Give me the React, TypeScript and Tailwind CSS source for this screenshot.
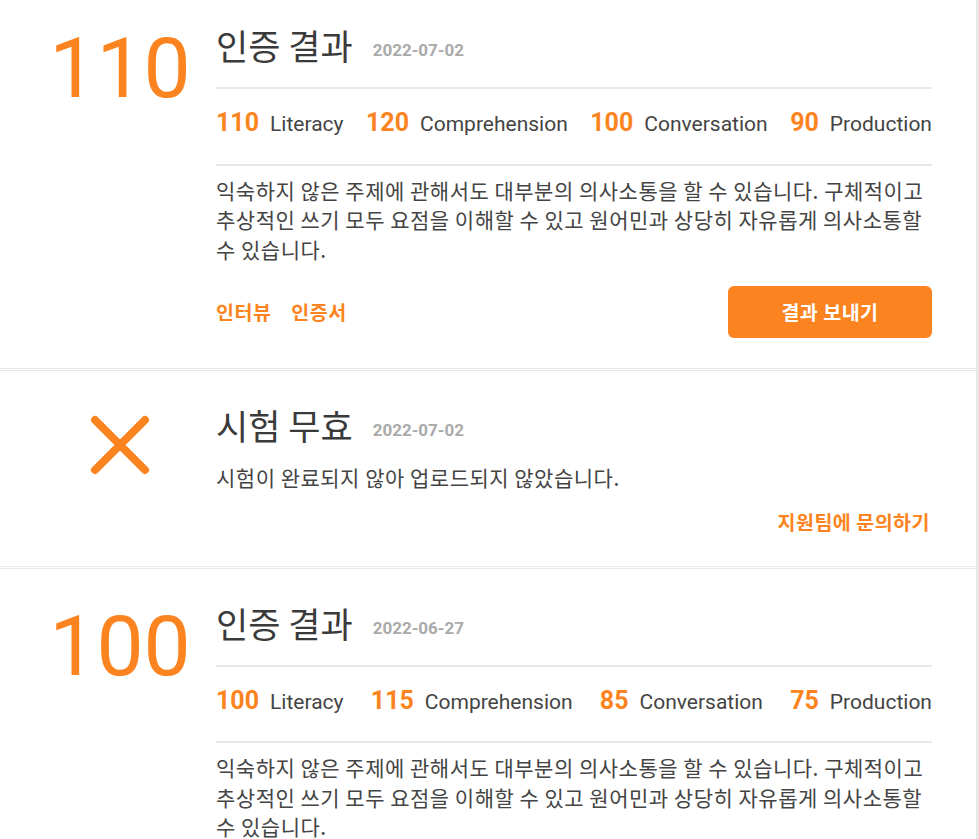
import React from "react";

const ORANGE = "text-[#fc8420]";
const KR = { fontFamily: '"Noto Sans CJK KR", "Noto Sans", sans-serif' };

type Stat = { v: string; label: string };

function XIcon() {
  return (
    <svg width="60" height="60" viewBox="0 0 60 60" className="mt-[14px]">
      <path d="M5 5 L55 55 M55 5 L5 55" stroke="#fc8420" strokeWidth="8" strokeLinecap="round" fill="none" />
    </svg>
  );
}

function Title({ text, date }: { text: string; date: string }) {
  return (
    <div className="flex items-center gap-[20px] h-[48px]">
      <span className="text-[35px] leading-[48px] text-[#3a3a3a]" style={KR}>{text}</span>
      <span className="text-[17px] leading-[20px] font-bold text-[#aaaaaa] mt-[10px]" style={{ fontFamily: "Roboto, sans-serif" }}>{date}</span>
    </div>
  );
}

function ResultCard({ score, date, stats, first }: { score: string; date: string; stats: Stat[]; first?: boolean }) {
  return (
    <div className={`flex bg-white ${first ? "-mt-[9px] border-b" : "border-y mt-[1px]"} border-[#e8e8e8] pt-[30px] pb-[30px]`}>
      <div className="w-[216px] pl-6 flex justify-center shrink-0">
        <div className={`${ORANGE} text-[84px] leading-none mt-[6px]`} style={{ fontFamily: "Roboto, sans-serif" }}>
          {score}
        </div>
      </div>
      <div className="w-[716px] flex flex-col">
        <Title text="인증 결과" date={date} />
        <div className="h-[2px] bg-[#e8e8e8] mt-[18px]" />
        <div className="flex justify-between items-baseline pt-[17px] pb-[23px]" style={{ fontFamily: "Roboto, sans-serif" }}>
          {stats.map((s) => (
            <div key={s.label} className="flex items-baseline gap-[11px]">
              <span className={`${ORANGE} text-[25px] font-bold leading-[33px]`}>{s.v}</span>
              <span className="text-[21px] text-[#444]">{s.label}</span>
            </div>
          ))}
        </div>
        <div className="h-[2px] bg-[#e8e8e8]" />
        <p className="mt-[10px] text-[21px] leading-[29.5px] tracking-[0.5px] text-[#444]" style={KR}>
          익숙하지 않은 주제에 관해서도 대부분의 의사소통을 할 수 있습니다. 구체적이고 추상적인 쓰기 모두 요점을 이해할 수 있고 원어민과 상당히 자유롭게 의사소통할 수 있습니다.
        </p>
        <div className="flex items-center justify-between mt-[22px]" style={KR}>
          <div className={`flex gap-[20px] ${ORANGE} font-bold text-[19.5px] tracking-[0.5px]`}>
            <span>인터뷰</span>
            <span>인증서</span>
          </div>
          <button className="w-[204px] h-[52px] rounded-[6px] bg-[#fc8420] text-white font-bold text-[19.5px] tracking-[0.5px]">결과 보내기</button>
        </div>
      </div>
    </div>
  );
}

function InvalidCard() {
  return (
    <div className="flex bg-white border-y mt-[1px] border-[#e8e8e8] pt-[30px] pb-[32px]">
      <div className="w-[216px] pl-6 flex justify-center items-start shrink-0">
        <XIcon />
      </div>
      <div className="w-[716px] flex flex-col">
        <Title text="시험 무효" date="2022-07-02" />
        <p className="mt-[14px] text-[21px] leading-[29.5px] tracking-[0.5px] text-[#444]" style={KR}>
          시험이 완료되지 않아 업로드되지 않았습니다.
        </p>
        <div className={`mt-[17px] text-right ${ORANGE} font-bold text-[19.5px] tracking-[0.5px] leading-[24px] pr-[2px]`} style={KR}>
          지원팀에 문의하기
        </div>
      </div>
    </div>
  );
}

export default function App() {
  return (
    <div className="w-[979px] h-[839px] overflow-hidden bg-white flex">
      <div className="w-[976px] flex flex-col">
        <ResultCard
          first
          score="110"
          date="2022-07-02"
          stats={[
            { v: "110", label: "Literacy" },
            { v: "120", label: "Comprehension" },
            { v: "100", label: "Conversation" },
            { v: "90", label: "Production" },
          ]}
        />
        <InvalidCard />
        <ResultCard
          score="100"
          date="2022-06-27"
          stats={[
            { v: "100", label: "Literacy" },
            { v: "115", label: "Comprehension" },
            { v: "85", label: "Conversation" },
            { v: "75", label: "Production" },
          ]}
        />
      </div>
      <div className="w-[3px] bg-[#e8e8e8]" />
    </div>
  );
}
